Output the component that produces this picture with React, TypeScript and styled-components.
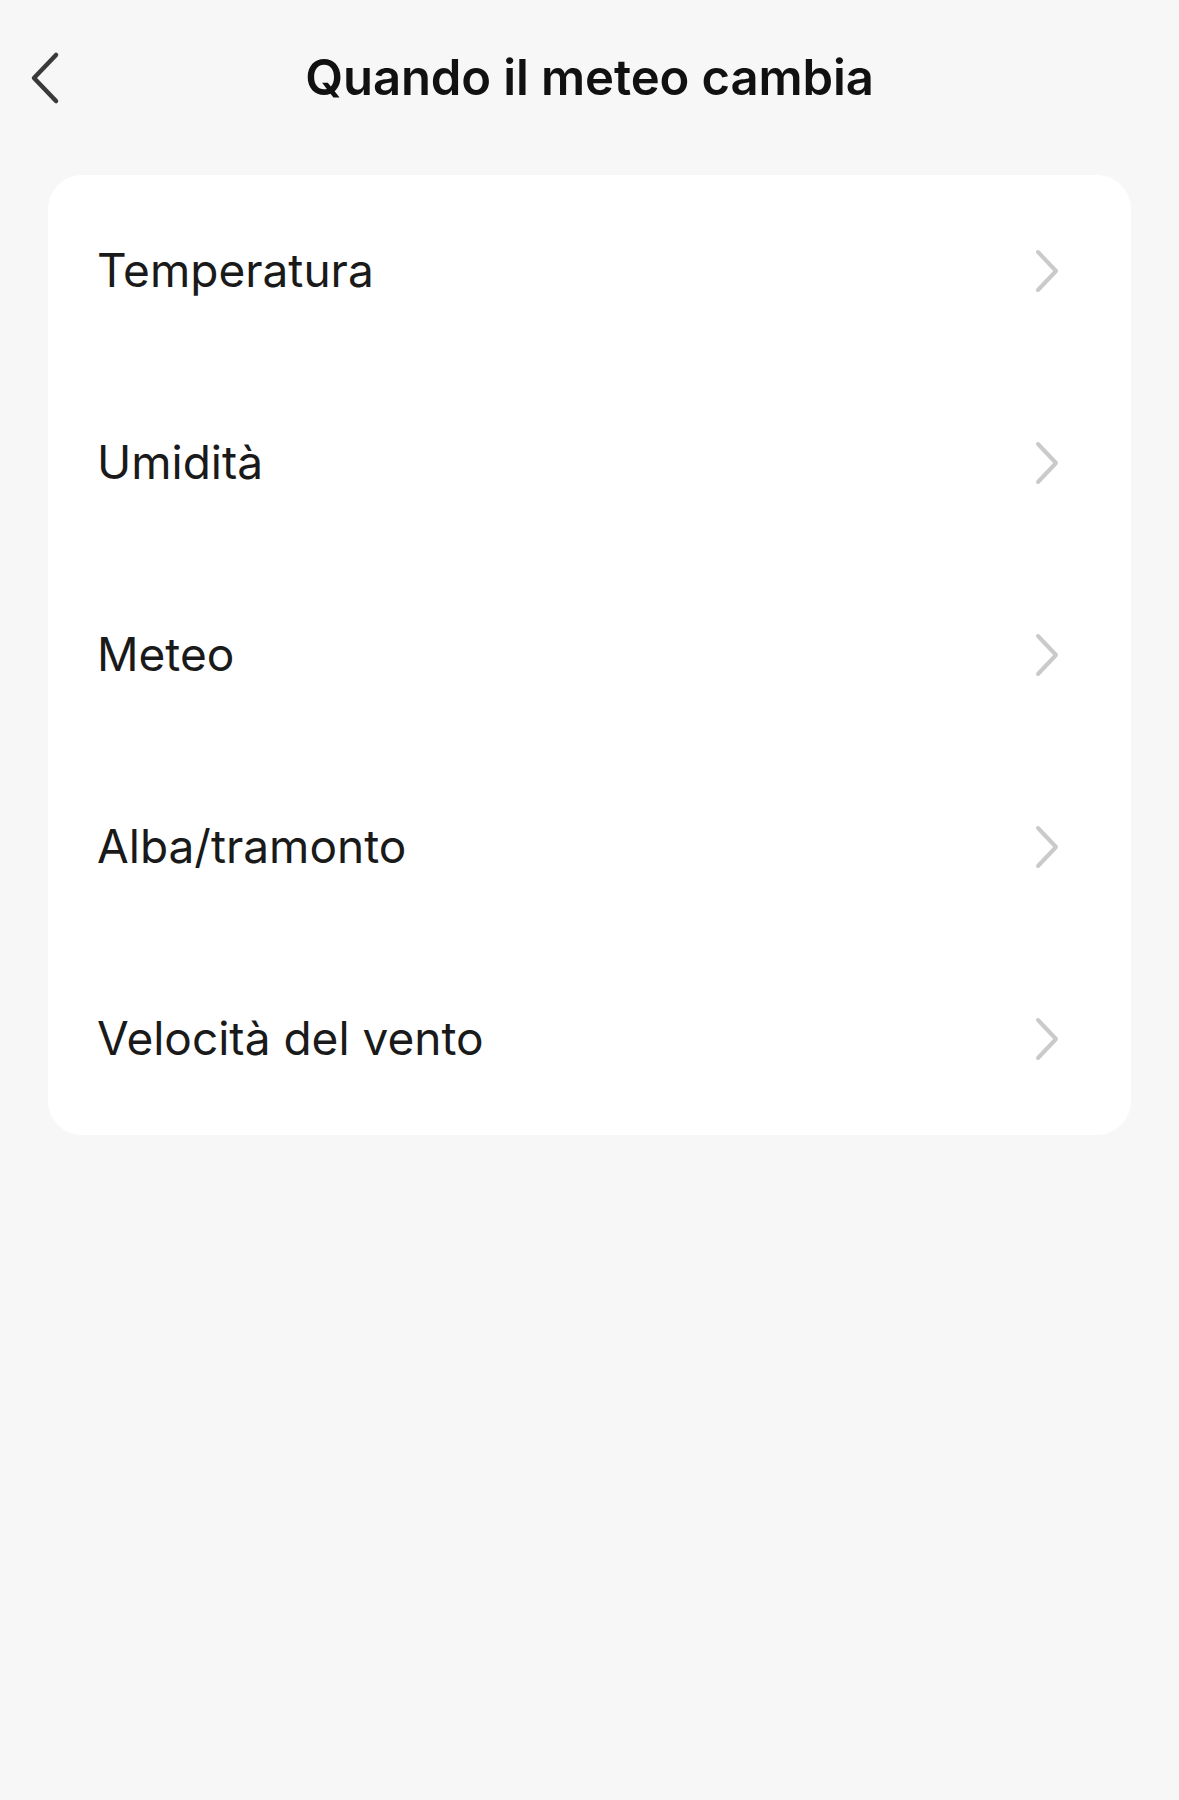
import styled, { createGlobalStyle } from "styled-components";

const GlobalStyle = createGlobalStyle`
  body {
    margin: 0;
    background: #f7f7f7;
    font-family: Inter, "Noto Sans", sans-serif;
  }
`

const options = [
  "Temperatura",
  "Umidità",
  "Meteo",
  "Alba/tramonto",
  "Velocità del vento",
];

export default function App() {
  return (
    <>
      <GlobalStyle />
      <Page>
        <Header>
          <BackButton aria-label="Indietro">
            <svg width="34" height="54" viewBox="0 0 34 54" fill="none">
              <path
                d="M28 4 L6 27 L28 50"
                stroke="#3a3a3a"
                strokeWidth="4.5"
                strokeLinecap="round"
                strokeLinejoin="round"
              />
            </svg>
          </BackButton>
          <Title>Quando il meteo cambia</Title>
        </Header>
        <Card>
          {options.map((label) => (
            <Row key={label}>
              <Label>{label}</Label>
              <svg width="28" height="46" viewBox="0 0 28 46" fill="none">
                <path
                  d="M5 4 L23 23 L5 42"
                  stroke="#cacaca"
                  strokeWidth="4"
                  strokeLinecap="round"
                  strokeLinejoin="round"
                />
              </svg>
            </Row>
          ))}
        </Card>
      </Page>
    </>
  )
}

const Page = styled.div`
  min-height: 1800px;
  background: #f7f7f7;
  padding: 0 48px;
  box-sizing: border-box;
`
const Header = styled.div`
  position: relative;
  height: 156px;
  display: flex;
  align-items: center;
  justify-content: center;
  padding-bottom: 2px;
`
const BackButton = styled.div`
  position: absolute;
  left: -20px;
  top: 51px;
  display: flex;
`
const Title = styled.div`
  font-size: 49px;
  font-weight: 600;
  color: #111;
  letter-spacing: -0.1px;
  margin-top: -2px;
`
const Card = styled.div`
  margin-top: 17px;
  background: #fff;
  border-radius: 34px;
  display: flex;
  flex-direction: column;
`
const Row = styled.div`
  height: 192px;
  display: flex;
  align-items: center;
  justify-content: space-between;
  padding: 0 70px 0 49px;
`
const Label = styled.div`
  font-size: 46px;
  color: #1a1a1a;
  font-weight: 400;
  margin-top: -3px;
`
